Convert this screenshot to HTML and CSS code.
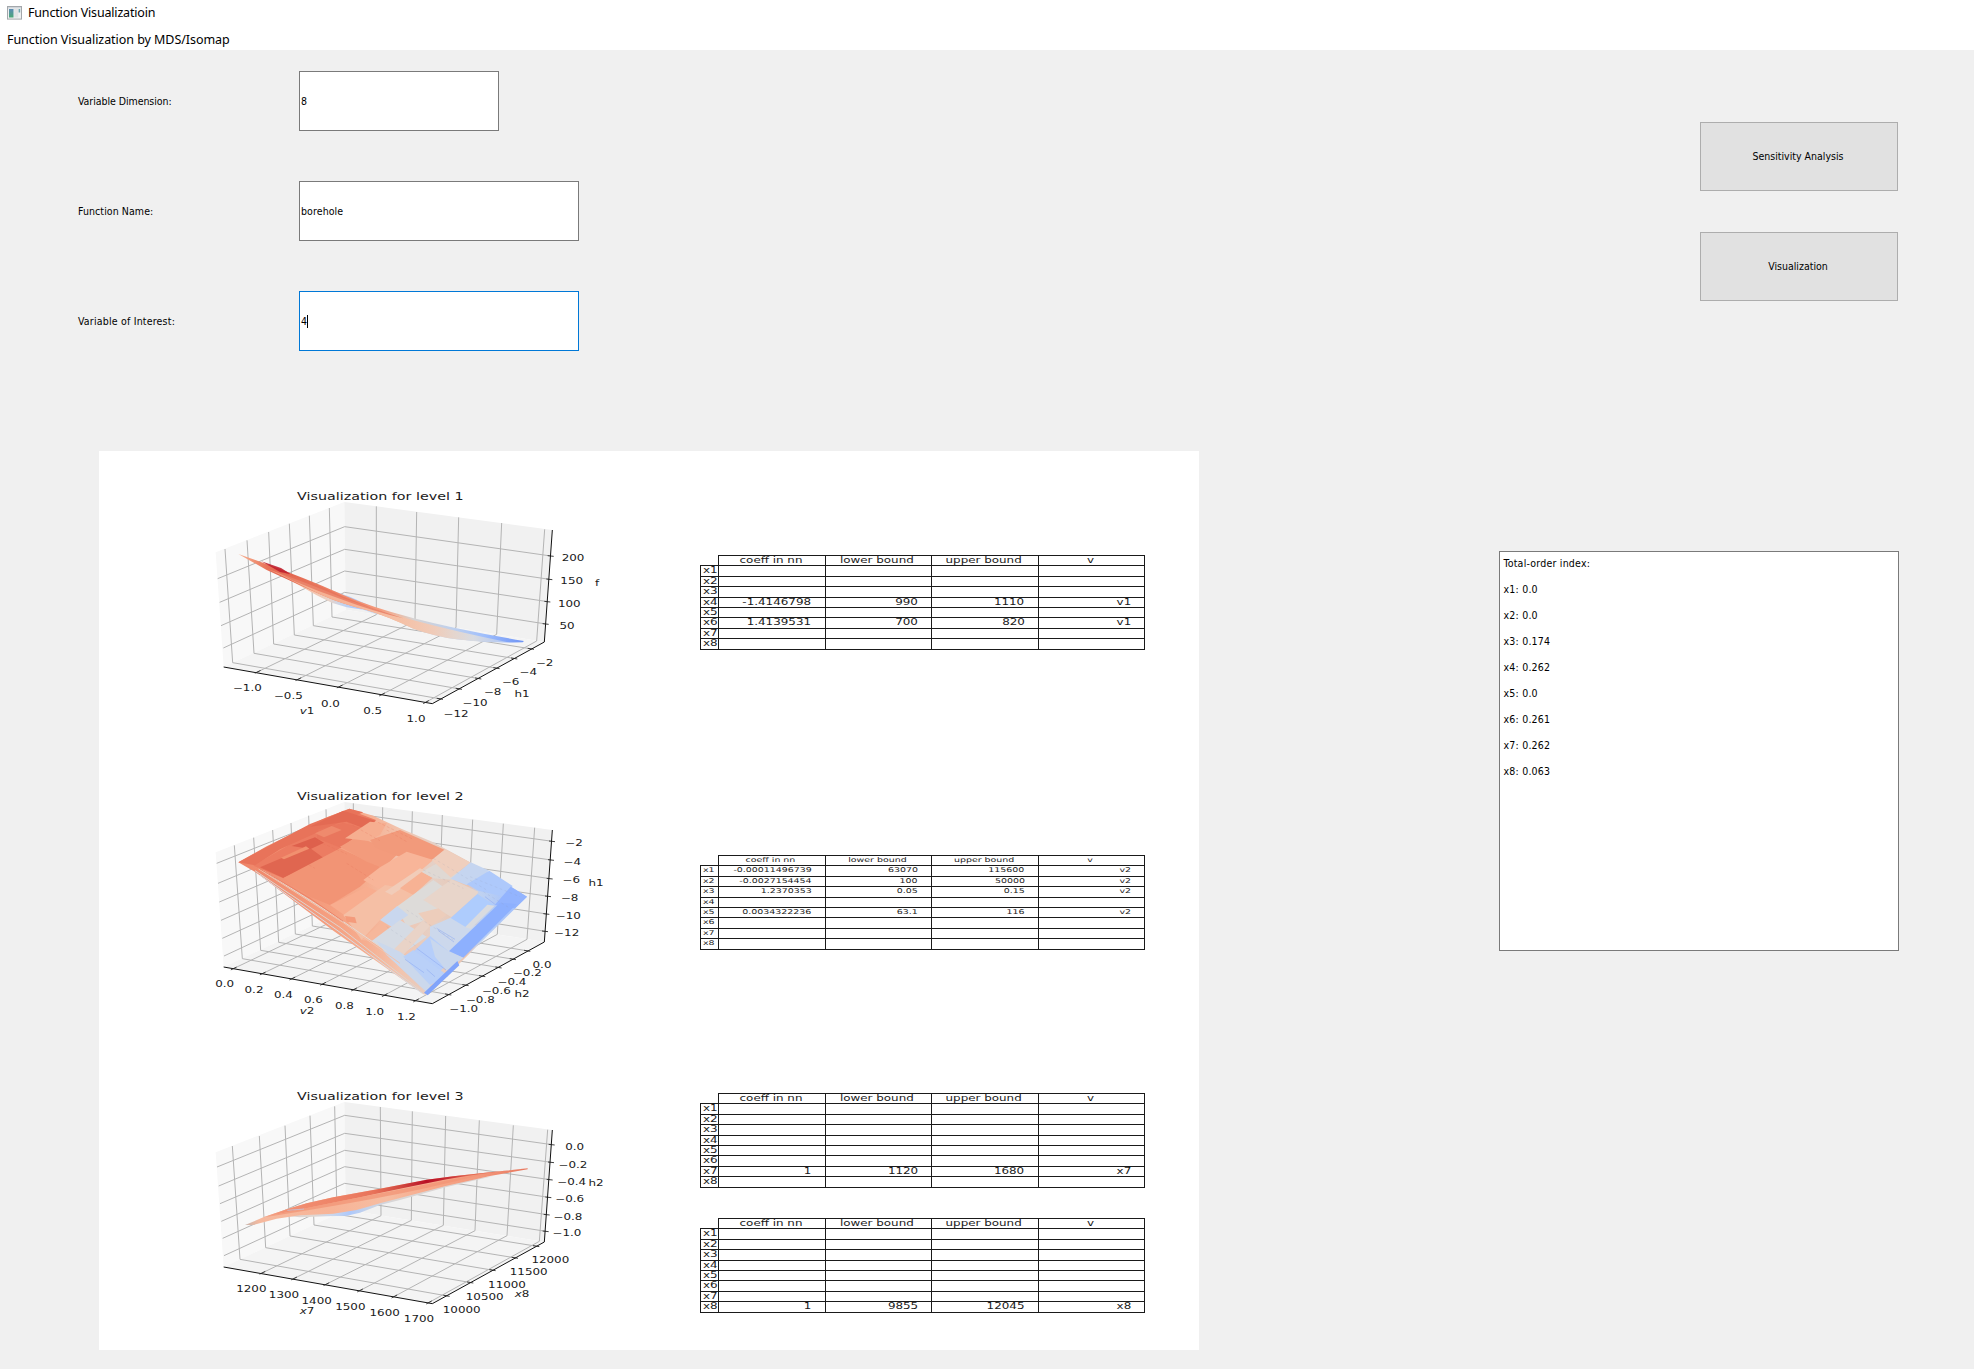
FILE: index.html
```html
<!DOCTYPE html>
<html lang="en">
<head>
<meta charset="utf-8">
<title>Function Visualizatioin</title>
<link rel="stylesheet" href="styles.css">
</head>
<body>
<header class="titlebar">
  <svg class="app-icon" width="15" height="14" viewBox="0 0 15 14">
    <defs><linearGradient id="pane" x1="0" y1="0" x2="0" y2="1"><stop offset="0" stop-color="#5b8bb5"/><stop offset="1" stop-color="#4ba876"/></linearGradient></defs>
    <rect x="0.5" y="0.5" width="14" height="12.6" fill="#eef0f1" stroke="#a3a7ab"/>
    <rect x="1" y="1" width="13" height="1.4" fill="#cfd5da"/>
    <rect x="2" y="3" width="4.5" height="8.5" fill="url(#pane)"/>
    <rect x="7.2" y="3" width="4" height="8.5" fill="#e0e2e4"/>
    <rect x="11.6" y="3" width="1.6" height="3.5" fill="#6ea6ae"/>
  </svg>
  <span class="title-text">Function Visualizatioin</span>
</header>
<nav class="menubar"><span class="menu-item">Function Visualization by MDS/Isomap</span></nav>
<main>
  <section class="controls">
    <div class="form">
      <div class="row"><span class="label tight">Variable Dimension:</span><div class="field short"><span>8</span></div></div>
      <div class="row"><span class="label">Function Name:</span><div class="field"><span>borehole</span></div></div>
      <div class="row"><span class="label wide">Variable of Interest:</span><div class="field focus"><span>4</span><i class="caret"></i></div></div>
    </div>
    <div class="buttons">
      <button type="button">Sensitivity Analysis</button>
      <button type="button">Visualization</button>
    </div>
  </section>
  <section class="results">
    <div class="figure">
      <div class="plots" id="plots"></div>
      <div class="tables" id="tables"></div>
    </div>
    <div class="log">
      <p>Total-order index:</p><p>x1: 0.0</p><p>x2: 0.0</p><p>x3: 0.174</p><p>x4: 0.262</p><p>x5: 0.0</p><p>x6: 0.261</p><p>x7: 0.262</p><p>x8: 0.063</p>
    </div>
  </section>
</main>
<script src="plots.js"></script>
</body>
</html>
```
FILE: styles.css
```css
* { box-sizing: border-box; }
body { margin: 0; width: 1974px; height: 1369px; overflow: hidden; background: #f0f0f0; color: #000; font: 10.5px/13px "DejaVu Sans Condensed", "DejaVu Sans", sans-serif; }
.titlebar, .menubar { background: #fff; height: 25px; display: flex; align-items: center; font: 12.5px/16px "Noto Sans", sans-serif; white-space: nowrap; }
.titlebar { padding-left: 7px; gap: 6px; letter-spacing: -0.17px; }
.menubar { padding: 4px 0 0 7px; letter-spacing: -0.05px; }
.app-icon { display: block; }
.controls { height: 401px; padding: 21px 76px 0 78px; display: flex; justify-content: space-between; }
.form { display: flex; flex-direction: column; gap: 50px; }
.row { display: flex; align-items: center; height: 60px; }
.label { width: 221px; padding-top: 1px; letter-spacing: 0.08px; }
.label.tight { letter-spacing: -0.05px; }
.label.wide { letter-spacing: 0.2px; }
.field { width: 280px; height: 60px; border: 1px solid #7a7a7a; background: #fff; display: flex; align-items: center; padding: 1px 0 0 1px; letter-spacing: 0.1px; }
.field.short { width: 200px; }
.field.focus { border-color: #0078d7; }
.caret { width: 1px; height: 13px; background: #000; }
.buttons { display: flex; flex-direction: column; gap: 41px; padding-top: 51px; }
button { width: 198px; height: 69px; border: 1px solid #adadad; background: #e1e1e1; font: inherit; color: inherit; padding: 0 2px 0 0; }
.results { display: flex; align-items: flex-start; gap: 300px; padding-left: 99px; }
.figure { width: 1100px; height: 899px; background: #fff; display: flex; gap: 80px; padding: 29px 0 0 101px; }
.plots { display: flex; flex-direction: column; gap: 50px; }
.plots svg { display: block; overflow: visible; }
.plots text { font-family: "DejaVu Sans", sans-serif; font-size: 25px; text-anchor: middle; fill: #1a1a1a; }
.plots .title { font-size: 30px; }
.plots .it { font-style: oblique; }
.tables { padding-top: 75px; }
.grid { display: grid; grid-template-columns: 18px repeat(4, 106.5px); grid-template-rows: repeat(9, 10.42px); width: 444px; height: 94px; font: 8.33px/10px "DejaVu Sans", sans-serif; color: #1a1a1a; }
.grid.t2 { margin-top: 206px; font-size: 6.6px; }
.grid.t3 { margin-top: 144px; }
.grid.t4 { margin-top: 31px; }
.cell { border: 1px solid #1a1a1a; margin: 0 -1px -1px 0; padding: 0 13px 0 2px; text-align: right; white-space: nowrap; line-height: 9px; }
.cell span { display: inline-block; transform: scaleX(1.43); transform-origin: 100% 50%; }
.cell.head { text-align: center; padding: 0 2px 0 0; }
.cell.head span { transform-origin: 50% 50%; }
.cell.name { text-align: left; padding: 0 0 0 2px; }
.cell.name span { transform-origin: 0 50%; }
.cell.corner { border: 0; }
.log { width: 400px; height: 400px; margin-top: 100px; border: 1px solid #7a7a7a; background: #fff; padding: 5px 3.5px; letter-spacing: 0.22px; }
.log p { margin: 0 0 13px; }
```
FILE: plots.js
```js
// Every plot shares one projected box, drawn in a 1260 x 750 space.
const BACK_X = 434;

function line(a, b, cls) {
  return `<line x1="${a[0]}" y1="${a[1]}" x2="${b[0]}" y2="${b[1]}" ${cls}/>`;
}
function poly(points, fill, extra = '') {
  return `<polygon points="${points}" fill="${fill}" ${extra}/>`;
}
function label(x, y, text, cls = '') {
  return `<text class="${cls}" transform="translate(${x} ${y + 9}) scale(1.43 1)">${text}</text>`;
}
function gradient(id, x1, x2, stops) {
  return `<linearGradient id="${id}" gradientUnits="userSpaceOnUse" x1="${x1}" y1="0" x2="${x2}" y2="0">` +
    stops.map(([x, c]) => `<stop offset="${(x - x1) / (x2 - x1)}" stop-color="${c}"/>`).join('') + '</linearGradient>';
}
function tick(at, toward) {
  const dx = toward[0] - at[0], dy = toward[1] - at[1], n = Math.hypot(dx, dy);
  const ux = dx / n, uy = dy / n;
  return line([at[0] - ux * 6, at[1] - uy * 6], [at[0] + ux * 13, at[1] + uy * 13], 'stroke="#222" stroke-width="2.6"');
}

function plot(p) {
  const g = 'stroke="#b4b4b4" stroke-width="3"', ax = 'stroke="#111" stroke-width="3"';
  let s = '<svg width="420" height="250" viewBox="0 0 1260 750">';
  s += '<defs>' + (p.defs || '') + '</defs>';
  s += poly('47,217 433,66 437,389 71,561', '#f8f8f8') + poly('433,66 1057,150 1033,486 437,389', '#f1f1f1') + poly('71,561 437,389 1033,486 697,671', '#f4f4f4');
  p.x.forEach(([t, b, f]) => { s += line(t, b, g) + line(b, f, g); });
  p.y.forEach(([t, b, r]) => { s += line(t, b, g) + line(b, r, g); });
  p.z.forEach(([l, m, r]) => { s += line(l, [BACK_X, m], g) + line([BACK_X, m], r, g); });
  s += line([71, 561], [697, 671], ax) + line([697, 671], [1033, 486], ax) + line([1033, 486], [1057, 150], ax);
  p.x.forEach(([, b, f]) => { s += tick(f, b); });
  p.y.forEach(([, b, r]) => { s += tick(r, b); });
  p.z.forEach(([, , r]) => { s += line([r[0] - 10, r[1] - 1], [r[0] + 8, r[1] + 1], 'stroke="#222" stroke-width="2.6"'); });
  s += p.surface;
  s += label(541, 52, p.title, 'title');
  p.labels.forEach(l => { s += label(...l); });
  return s + '</svg>';
}

const level1 = {
  title: 'Visualization for level 1',
  x: [[[529, 79], [529, 404], [170, 577]], [[650, 96], [645, 423], [292, 599]], [[776, 112], [768, 443], [416, 621]], [[905, 129], [890, 463], [543, 645]], [[1034, 148], [1010, 483], [675, 668]]],
  y: [[[75, 207], [98, 548], [723, 657]], [[141, 181], [162, 520], [780, 627]], [[206, 156], [221, 492], [838, 596]], [[268, 131], [283, 465], [893, 565]], [[328, 107], [340, 437], [946, 536]], [[388, 84], [396, 411], [996, 507]]],
  z: [[[53, 296], 140, [1053, 228]], [[59, 367], 208, [1049, 298]], [[63, 437], 273, [1043, 365]], [[70, 504], 337, [1038, 432]]],
  defs: gradient('a1', 115, 560, [[115, '#f7b89c'], [330, '#f5c0a7'], [385, '#ead4c8'], [425, '#c6d4ec'], [465, '#afcafc'], [530, '#d0d9e8'], [560, '#e5d0c5']]) +
    gradient('b1', 115, 970, [[115, '#f6b294'], [150, '#f39c7d'], [200, '#e8735a'], [250, '#e0604c'], [340, '#e9785d'], [430, '#f0896b'], [540, '#f59c7d'], [600, '#e9bda9'], [640, '#d6d3d3'], [760, '#bfd0ed'], [850, '#a0bffc'], [970, '#6f94f5']]) +
    gradient('c1', 200, 960, [[200, '#f18d6f'], [300, '#f4ae90'], [450, '#f7b396'], [600, '#f5c0a5'], [700, '#f0cbb8'], [760, '#e5d5cd'], [820, '#d9dbe0'], [960, '#9dbdfd']]),
  surface: poly('190,258 300,317 350,346 395,368 440,382 490,389 530,403 570,404 450,350', 'url(#a1)') +
    '<path d="M115 222Q300 287 430 345Q600 420 972 483L968 487Q880 489 770 478Q700 468 640 446Q560 408 500 390Q420 371 360 343L200 270Z" fill="url(#b1)"/>' +
    '<path d="M205 268Q330 312 430 355Q620 425 920 486Q860 489 770 478Q700 468 640 446Q560 408 500 390Q420 371 360 343Z" fill="url(#c1)"/>' +
    '<path d="M215 268Q340 307 430 350Q520 387 610 415Q520 394 430 360Q350 332 280 302Z" fill="#e57058" opacity=".7"/>' +
    poly('184,244 243,264 272,282 240,276', '#c0202e', 'opacity=".9"'),
  labels: [[142, 625, '−1.0'], [265, 648, '−0.5'], [391, 671, '0.0'], [518, 694, '0.5'], [648, 717, '1.0'],
    [768, 701, '−12'], [825, 669, '−10'], [878, 637, '−8'], [932, 607, '−6'], [985, 577, '−4'], [1034, 549, '−2'],
    [1119, 234, '200'], [1115, 303, '150'], [1108, 371, '100'], [1101, 438, '50'],
    [321, 693, '<tspan class="it">v</tspan>1'], [966, 641, 'h1'], [1191, 310, 'f']]
};

const patches2 = [
  ['160,257 448,90 528,120 505,150 470,168 455,180 420,205 372,245 250,295', '#ec7c62'],
  ['115,247 190,206 330,132 448,86 490,97 380,145 240,208 165,256', '#e8735a'],
  ['330,140 430,92 525,122 505,150 440,125', '#e36a53'],
  ['355,148 430,128 510,150 462,172 422,203 350,175', '#e9765d'],
  ['180,262 325,200 372,235 250,294', '#e06650'],
  ['275,198 345,172 372,188 332,207', '#de604c'],
  ['243,233 318,199 328,206 252,238', '#f1906f'],
  ['345,160 395,138 425,150 372,172', '#ef8a6d'],
  ['250,294 420,205 545,262 480,320 390,375 330,350', '#f29475'],
  ['420,200 470,172 600,215 550,265 500,245', '#f39b7c'],
  ['435,175 510,125 560,130 540,165 500,182', '#f6ae90'],
  ['510,180 600,150 735,210 700,240 610,235 530,205', '#f29a7b'],
  ['390,375 500,320 560,345 440,410', '#f8ad8f'],
  ['540,262 620,215 700,240 640,290 560,340 490,300', '#f8b599'],
  ['430,405 555,315 610,325 640,345 540,420 485,480', '#f5bfa5'],
  ['435,408 465,412 470,430 440,425', '#f49b7c'],
  ['555,335 660,265 680,275 575,345', '#f1ccb9'],
  ['600,325 665,276 698,293 640,345', '#f7b294'],
  ['665,275 720,245 810,285 760,300 700,295', '#dfd8d3'],
  ['695,240 735,208 812,248 752,292', '#efcfbe'],
  ['590,380 700,300 765,345 680,420 620,440', '#dddbd9'],
  ['670,360 755,298 835,335 830,345 755,412', '#e8d5ca'],
  ['485,480 545,425 570,440 515,483', '#f6b79b'],
  ['540,420 592,378 625,405 575,440', '#c9d7ee'],
  ['515,483 600,420 680,470 610,520 565,515', '#d5dbe4'],
  ['580,510 690,400 720,405 610,525', '#e9d3c7'],
  ['655,400 715,385 740,405 690,440', '#edcdbb'],
  ['690,440 755,412 800,440 860,430 750,520 690,475', '#ccd8ec'],
  ['752,296 812,247 868,272 800,316', '#c5d5f0'],
  ['800,313 868,272 938,318 912,350 835,332', '#aec9fb'],
  ['752,414 832,342 882,374 798,442', '#aeccfd'],
  ['795,442 862,374 884,377 812,446', '#d9dbdf'],
  ['884,375 932,320 981,350 945,385', '#93b4fe'],
  ['745,515 900,368 950,372 790,533', '#8db0fe'],
  ['640,515 690,468 765,530 705,588', '#b6cefa'],
  ['690,475 740,510 790,533 740,572 705,530', '#c9d7ed'],
  ['530,483 600,515 700,590 683,640 560,525', '#cbd8ec'],
  ['610,530 640,510 745,588 690,615', '#b9d0f8'],
  ['672,638 772,543 778,556 683,646', '#81a4fb']
];
let surface2 = poly('115,247 200,199 300,150 380,112 448,86 520,107 600,145 700,187 810,247 930,318 981,350 683,645 670,643 640,622 400,452 170,279', 'url(#b2)');
patches2.forEach(([pts, c]) => { surface2 += poly(pts, c); });
// thin folds that run along the lower edge, and the seams between patches
surface2 += '<g fill="none" stroke-width="3"><path d="M165 272L420 442L660 630" stroke="#dfd4ce"/><path d="M175 266L430 428L600 550" stroke="#f3c3ab"/><path d="M190 272L420 418L560 514" stroke="#e3dad5"/><path d="M172 262L330 355L430 424" stroke="#ec8266"/><path d="M180 286L420 457L668 641" stroke="#d8dbe2"/></g>' +
  '<g fill="none" stroke="#7f9ff0" stroke-width="1.6" opacity=".8"><path d="M615 538L672 578M650 505L738 570M680 568L705 590M710 445L765 478M715 452L762 486M855 350L884 372"/></g>' +
  '<g fill="none" stroke="#e06b52" stroke-width="1.4" opacity=".45" stroke-dasharray="9 6"><path d="M340 178L440 222M430 120L540 182M300 240L345 265M520 120L640 178M560 150L620 185M440 250L520 300"/></g>' +
  '<g fill="none" stroke="#8d94aa" stroke-width="1.2" opacity=".4" stroke-dasharray="8 8"><path d="M700 235L860 330M670 270L790 325M620 390L760 480M560 440L650 500M810 290L960 350M850 335L930 385"/></g>';

const level2 = {
  title: 'Visualization for level 2',
  x: [[[460, 70], [461, 394], [98, 567]], [[548, 82], [546, 407], [185, 582]], [[637, 94], [630, 420], [274, 597]], [[727, 105], [716, 434], [366, 613]], [[818, 119], [803, 449], [459, 630]], [[910, 131], [892, 463], [551, 647]], [[1004, 143], [981, 478], [645, 663]]],
  y: [[[103, 196], [127, 536], [748, 644]], [[161, 173], [182, 511], [800, 616]], [[218, 150], [236, 487], [850, 589]], [[273, 129], [286, 462], [899, 563]], [[326, 107], [337, 438], [942, 538]], [[378, 88], [386, 415], [985, 513]]],
  z: [[[50, 250], 97, [1057, 184]], [[54, 310], 151, [1054, 240]], [[58, 366], 205, [1050, 296]], [[63, 421], 257, [1045, 349]], [[67, 475], 308, [1040, 402]], [[72, 528], 359, [1036, 454]]],
  defs: gradient('b2', 115, 981, [[115, '#ee8468'], [400, '#f5a081'], [500, '#f6ae90'], [600, '#f2c4ae'], [700, '#e4d0c6'], [800, '#ecc5b0'], [840, '#c0d2f0'], [981, '#9abbff']]),
  surface: surface2,
  labels: [[74, 612, '0.0'], [162, 629, '0.2'], [250, 644, '0.4'], [340, 661, '0.6'], [433, 678, '0.8'], [524, 695, '1.0'], [619, 712, '1.2'],
    [791, 688, '−1.0'], [841, 659, '−0.8'], [889, 632, '−0.6'], [936, 605, '−0.4'], [982, 579, '−0.2'], [1026, 554, '0.0'],
    [1122, 190, '−2'], [1117, 246, '−4'], [1114, 301, '−6'], [1109, 355, '−8'], [1105, 408, '−10'], [1100, 460, '−12'],
    [321, 693, '<tspan class="it">v</tspan>2'], [966, 641, 'h2'], [1188, 310, 'h1']]
};

const level3 = {
  title: 'Visualization for level 3',
  x: [[[541, 81], [543, 407], [184, 580]], [[637, 94], [634, 421], [279, 597]], [[737, 108], [730, 436], [376, 614]], [[838, 121], [825, 452], [477, 633]], [[940, 136], [921, 467], [580, 651]], [[1043, 149], [1018, 484], [684, 669]]],
  y: [[[97, 198], [120, 538], [743, 648]], [[178, 168], [197, 503], [814, 608]], [[255, 137], [270, 468], [881, 571]], [[330, 107], [342, 435], [948, 534]], [[404, 79], [411, 403], [1012, 499]]],
  z: [[[51, 261], 106, [1056, 194]], [[56, 318], 160, [1054, 247]], [[60, 371], 211, [1050, 299]], [[64, 424], 260, [1046, 352]], [[68, 475], 310, [1041, 404]], [[72, 527], 360, [1038, 454]]],
  defs: gradient('a3', 135, 983, [[135, '#f7b699'], [250, '#f29275'], [400, '#ee8468'], [520, '#e8735a'], [600, '#d24a40'], [680, '#b91126'], [750, '#c83237'], [810, '#e36a53'], [983, '#e8765c']]) +
    gradient('b3', 135, 983, [[135, '#c9b6ae'], [180, '#f6b99e'], [400, '#f7b497'], [560, '#f6bda2'], [700, '#f7a889'], [850, '#f2967a'], [983, '#e8765c']]) +
    gradient('c3', 230, 900, [[230, '#d9d5d6'], [340, '#e0d6d0'], [400, '#c8d6ee'], [450, '#adc9fc'], [500, '#c4d2ea'], [580, '#d9d6d6'], [900, '#dcd2ce']]),
  surface: poly('230,405 400,380 600,345 800,300 880,288 740,321 600,360 540,375 480,398 440,407 380,409 300,412', 'url(#c3)') +
    poly('135,435 190,412 265,386 320,370 400,352 540,326 680,299 760,289 870,277 983,265 983,268 870,288 740,317 600,354 540,370 470,390 400,401 300,406 230,416 160,435', 'url(#b3)') +
    '<path d="M190 412L265 386L320 370L400 352L540 326L680 299L760 289L870 277L983 265Q850 278 740 298Q600 326 480 352Q340 380 190 412Z" fill="url(#a3)"/>' +
    '<path d="M190 412Q360 375 480 352Q680 312 860 280Q680 328 520 356Q380 382 190 412Z" fill="#f29476" opacity=".75"/>' +
    '<path d="M262 391L312 387" stroke="#b8cdf2" stroke-width="2"/>',
  labels: [[154, 627, '1200'], [252, 645, '1300'], [350, 663, '1400'], [451, 682, '1500'], [554, 700, '1600'], [657, 717, '1700'],
    [785, 691, '10000'], [854, 652, '10500'], [921, 614, '11000'], [986, 577, '11500'], [1051, 541, '12000'],
    [1124, 200, '0.0'], [1119, 254, '−0.2'], [1115, 307, '−0.4'], [1109, 357, '−0.6'], [1104, 410, '−0.8'], [1101, 458, '−1.0'],
    [321, 693, '<tspan class="it">x</tspan>7'], [966, 641, '<tspan class="it">x</tspan>8'], [1188, 310, 'h2']]
};

document.getElementById('plots').innerHTML = [level1, level2, level3].map(plot).join('');

// Coefficient tables: row number -> the four values of that row.
const tables = [
  { 4: ['-1.4146798', '990', '1110', 'v1'], 6: ['1.4139531', '700', '820', 'v1'] },
  { 1: ['-0.00011496739', '63070', '115600', 'v2'], 2: ['-0.0027154454', '100', '50000', 'v2'], 3: ['1.2370353', '0.05', '0.15', 'v2'], 5: ['0.0034322236', '63.1', '116', 'v2'] },
  { 7: ['1', '1120', '1680', 'x7'] },
  { 8: ['1', '9855', '12045', 'x8'] }
];
const cell = (text, cls = '') => `<div class="cell ${cls}"><span>${text}</span></div>`;
document.getElementById('tables').innerHTML = tables.map((rows, i) => {
  let s = `<div class="grid t${i + 1}">` + cell('', 'corner') + ['coeff in nn', 'lower bound', 'upper bound', 'v'].map(t => cell(t, 'head')).join('');
  for (let r = 1; r <= 8; r++) s += cell('x' + r, 'name') + (rows[r] || ['', '', '', '']).map(t => cell(t)).join('');
  return s + '</div>';
}).join('');
```
